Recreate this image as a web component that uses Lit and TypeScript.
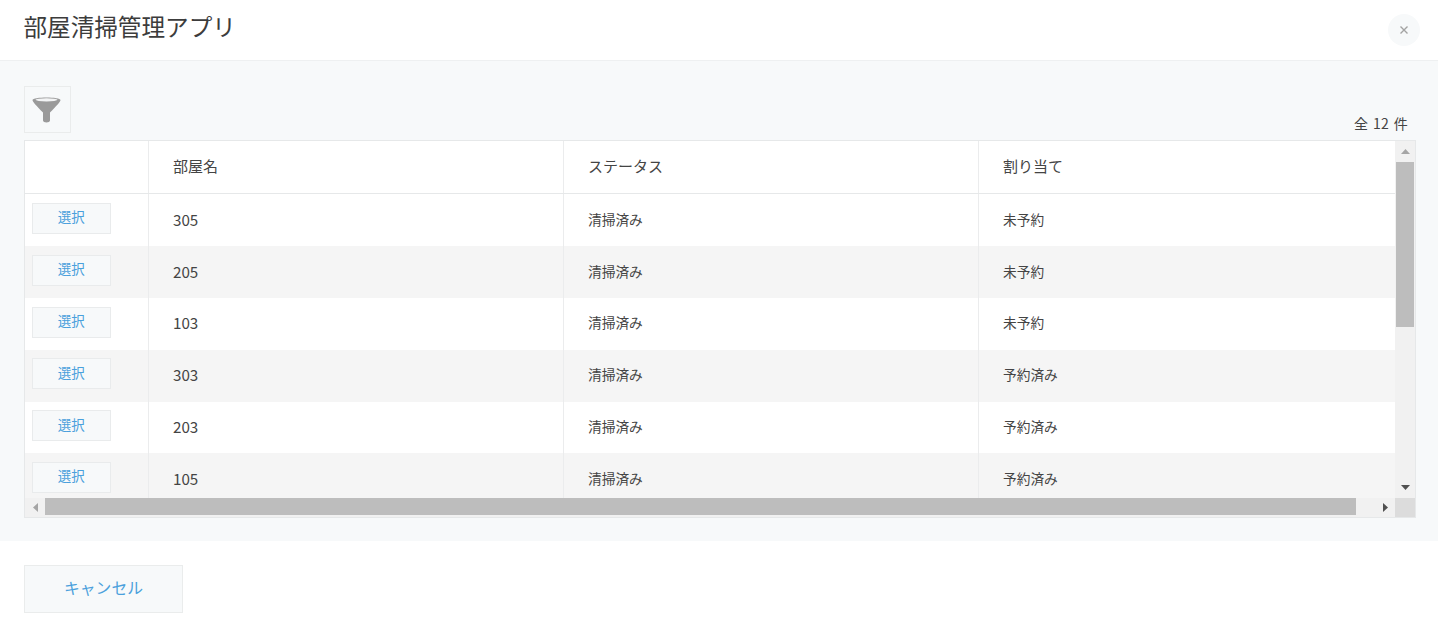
import { LitElement, html, css } from "lit";
import { customElement } from "lit/decorators.js";

const rows = [
  ["305", "清掃済み", "未予約"],
  ["205", "清掃済み", "未予約"],
  ["103", "清掃済み", "未予約"],
  ["303", "清掃済み", "予約済み"],
  ["203", "清掃済み", "予約済み"],
  ["105", "清掃済み", "予約済み"],
];

@customElement("app-root")
export class AppRoot extends LitElement {
  static styles = css`
    :host {
      display: block;
      width: 1438px;
      height: 628px;
      overflow: hidden;
      background: #fff;
      font-family: "Noto Sans CJK JP", "Noto Sans", sans-serif;
      color: #444;
    }
    .header {
      box-sizing: border-box;
      border-bottom: 1px solid #eef0f1;
      display: flex;
      justify-content: space-between;
      padding: 0 18px 0 23.5px;
      height: 61px;
    }
    .title {
      font-size: 23.6px;
      line-height: 53px;
      color: #3c3c3c;
    }
    .close {
      width: 32px;
      height: 32px;
      margin-top: 14px;
      border-radius: 50%;
      background: #f7f9fa;
      display: flex;
      align-items: center;
      justify-content: center;
    }
    .body {
      height: 480px;
      box-sizing: border-box;
      background: #f7f9fa;
      padding: 25px 22px 0 24px;
    }
    .toolbar {
      height: 54px;
      display: flex;
      justify-content: space-between;
      align-items: flex-start;
    }
    .filter {
      width: 47px;
      height: 47px;
      box-sizing: border-box;
      border: 1px solid #eaecec;
      background: #f7f9fa;
      display: flex;
      align-items: center;
      justify-content: center;
      padding-right: 1px;
    }
    .count {
      font-size: 14px;
      line-height: 20px;
      margin-top: 27px;
      margin-right: 8px;
      word-spacing: 1px;
      letter-spacing: 0.35px;
    }
    .box {
      height: 378px;
      box-sizing: border-box;
      border: 1px solid #e6e8e9;
      background: #fff;
      display: grid;
      grid-template-columns: 1fr 20px;
      grid-template-rows: 1fr 19px;
    }
    .scroll-area {
      overflow: hidden;
      min-width: 0;
      min-height: 0;
    }
    .head,
    .row {
      display: grid;
      grid-template-columns: 124px 415px 415px 1fr;
    }
    .head {
      height: 53.4px;
      box-sizing: border-box;
      border-bottom: 1px solid #e6e8e9;
      font-size: 15px;
    }
    .head .cell {
      padding-bottom: 4px;
    }
    .row {
      height: 51.8px;
      font-size: 13.7px;
    }
    .row.alt {
      background: #f5f5f5;
    }
    .cell {
      display: flex;
      align-items: center;
      padding-left: 24px;
      border-right: 1px solid #ebeced;
      box-sizing: border-box;
      padding-bottom: 3px;
    }
    .cell:last-child {
      border-right: none;
    }
    .cell.num {
      font-size: 15.2px;
      padding-bottom: 3px;
    }
    .cell.btn-cell {
      padding: 8.6px 0 0 7px;
      align-items: flex-start;
    }
    .select {
      width: 78.5px;
      height: 31px;
      box-sizing: border-box;
      border: 1px solid #e9ebec;
      background: #f7f9fa;
      color: #4aa0dc;
      font-size: 13.5px;
      display: flex;
      align-items: center;
      justify-content: center;
      padding-bottom: 4px;
    }
    .v-bar {
      background: #f1f1f1;
      display: flex;
      flex-direction: column;
      align-items: center;
    }
    .v-arrow {
      height: 21px;
      flex: none;
      display: flex;
      align-items: center;
      justify-content: center;
    }
    .v-thumb {
      width: 18px;
      height: 165px;
      flex: none;
      background: #bdbdbd;
    }
    .v-fill {
      flex: 1;
    }
    .h-bar {
      background: #f1f1f1;
      display: flex;
      align-items: stretch;
    }
    .h-arrow {
      width: 20px;
      flex: none;
      display: flex;
      align-items: center;
      justify-content: center;
    }
    .h-thumb {
      width: 1311px;
      flex: none;
      height: 17px;
      background: #bdbdbd;
    }
    .h-fill {
      flex: 1;
    }
    .corner {
      background: #dcdcdc;
    }
    .footer {
      padding: 23.5px 0 0 24px;
    }
    .cancel {
      width: 159px;
      height: 48px;
      box-sizing: border-box;
      border: 1px solid #eaecec;
      background: #f7f9fa;
      color: #4aa0dc;
      font-size: 15.8px;
      display: flex;
      align-items: center;
      justify-content: center;
      padding-bottom: 3px;
    }
  `;

  render() {
    return html`
      <div class="header">
        <div class="title">部屋清掃管理アプリ</div>
        <div class="close">
          <svg width="10" height="10" viewBox="0 0 10 10">
            <path d="M1.5 1.5L8.5 8.5M8.5 1.5L1.5 8.5" stroke="#a3a3a3" stroke-width="1.4" fill="none" />
          </svg>
        </div>
      </div>
      <div class="body">
        <div class="toolbar">
          <div class="filter">
            <svg width="30" height="30" viewBox="0 0 30 30">
              <path d="M0.5 5C0.5 1.5 28.5 1.5 28.5 5C28.5 6.5 24.5 11 18 17.5V25.5C18 28 11 28 11 25.5V17.5C4.5 11 0.5 6.5 0.5 5Z" fill="#9a9a9a" />
              <ellipse cx="14.5" cy="4.8" rx="11" ry="1.6" fill="#f3f4f5" />
            </svg>
          </div>
          <div class="count">全 12 件</div>
        </div>
        <div class="box">
          <div class="scroll-area">
            <div class="head">
              <div class="cell"></div>
              <div class="cell">部屋名</div>
              <div class="cell">ステータス</div>
              <div class="cell">割り当て</div>
            </div>
            ${rows.map(
              (r, i) => html`
                <div class="row ${i % 2 ? "alt" : ""}">
                  <div class="cell btn-cell"><div class="select">選択</div></div>
                  <div class="cell num">${r[0]}</div>
                  <div class="cell">${r[1]}</div>
                  <div class="cell">${r[2]}</div>
                </div>
              `
            )}
          </div>
          <div class="v-bar">
            <div class="v-arrow">
              <svg width="9" height="5" viewBox="0 0 9 5"><path d="M4.5 0L9 5H0Z" fill="#a5a5a5" /></svg>
            </div>
            <div class="v-thumb"></div>
            <div class="v-fill"></div>
            <div class="v-arrow">
              <svg width="9" height="5" viewBox="0 0 9 5"><path d="M0 0H9L4.5 5Z" fill="#505050" /></svg>
            </div>
          </div>
          <div class="h-bar">
            <div class="h-arrow">
              <svg width="5" height="9" viewBox="0 0 5 9"><path d="M5 0V9L0 4.5Z" fill="#a5a5a5" /></svg>
            </div>
            <div class="h-thumb"></div>
            <div class="h-fill"></div>
            <div class="h-arrow">
              <svg width="5" height="9" viewBox="0 0 5 9"><path d="M0 0V9L5 4.5Z" fill="#505050" /></svg>
            </div>
          </div>
          <div class="corner"></div>
        </div>
      </div>
      <div class="footer">
        <div class="cancel">キャンセル</div>
      </div>
    `;
  }
}
